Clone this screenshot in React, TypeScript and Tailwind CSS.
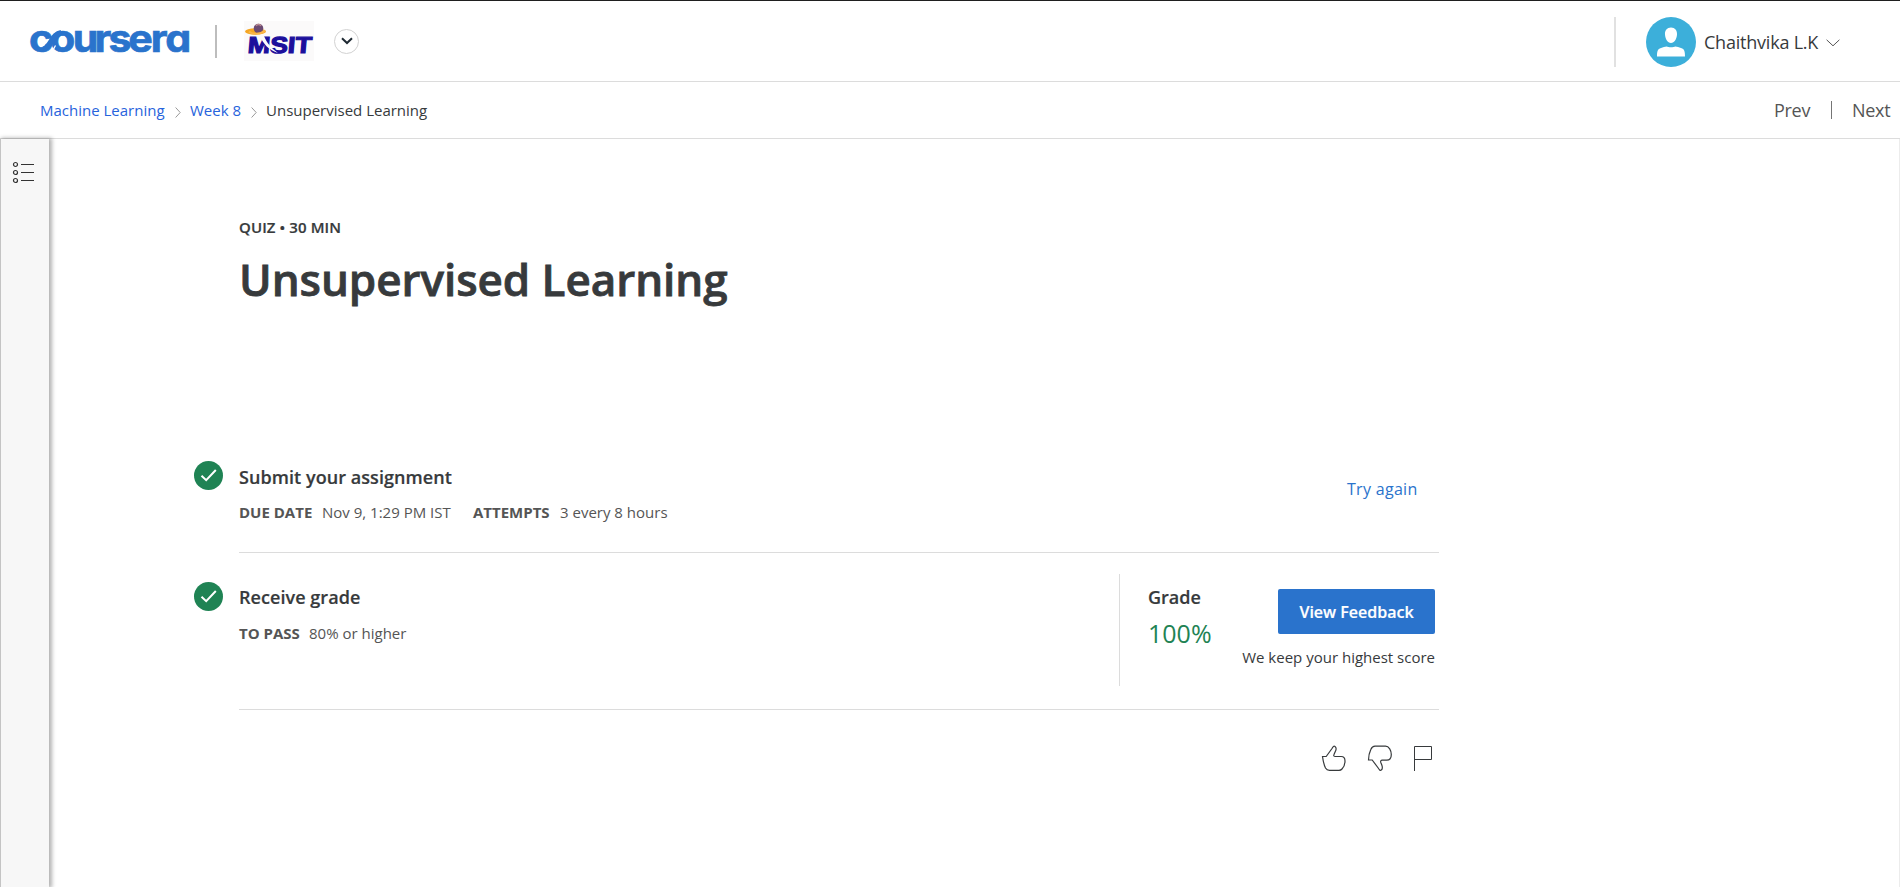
import React from "react";

function CourseraLogo() {
  return (
    <svg width="164" height="56" viewBox="28 13 164 56" className="block overflow-visible">
      <text
        x="27.1 46.800 67.900 88.400 101.500 119.900 141 154.400"
        y="51.6"
        transform="scale(1.07 1)"
        fill="#2a73cc"
        stroke="#2a73cc"
        strokeWidth="0.700"
        className="font-[Inter,sans-serif] text-[38.5px] font-bold leading-none [font-feature-settings:'cv11']"
      >
        coursera
      </text>
      <path d="M43 49.300C51 48 52 33.500 61 32.700" fill="none" stroke="#2a73cc" strokeWidth="5.500" />
      <path d="M52 52l3.500-6.500" fill="none" stroke="#fff" strokeWidth="1.300" />
    </svg>
  );
}

function MsitLogo() {
  return (
    <svg width="70" height="40" viewBox="0 0 70 40" className="block overflow-visible">
      <rect width="70" height="40" fill="#fbfafa" />
      <ellipse cx="11.500" cy="10.500" rx="10.500" ry="3.200" fill="#f5a623" />
      <circle cx="14.500" cy="7.500" r="4.800" fill="#6b4a72" />
      <path d="M12 5c1-2 4-2 5 0" stroke="#b98a90" strokeWidth="1.500" fill="none" />
      <path d="M5 10.500c3 3 12 3 16-1" stroke="#f9b64a" strokeWidth="2" fill="none" />
      <text
        x="3"
        y="32.500"
        textLength="64"
        lengthAdjust="spacingAndGlyphs"
        transform="translate(3 0) skewX(-5)"
        fill="#1c0f9c"
        stroke="#1c0f9c"
        strokeWidth="1.200"
        className="font-['Liberation_Sans',Arial,sans-serif] text-[23px] font-bold leading-none"
      >
        MSIT
      </text>
      <path d="M16 15c3 8 9 14 18 17-7-5-11-10-14-17z" fill="#fbfafa" />
    </svg>
  );
}

function Check() {
  return (
    <svg width="29" height="29" viewBox="0 0 29 29" className="block shrink-0">
      <circle cx="14.500" cy="14.500" r="14.500" fill="#1f8354" />
      <path d="M7.500 14.700l4.700 4.500L21.800 9" fill="none" stroke="#fff" strokeWidth="2" />
    </svg>
  );
}

function Crumb() {
  return (
    <svg width="6" height="11" viewBox="0 0 6 11" className="mt-1 block">
      <path d="M.6.5l4.600 5-4.600 5" fill="none" stroke="#999" />
    </svg>
  );
}

export default function App() {
  return (
    <div className="flex h-[887px] w-[1900px] flex-col overflow-hidden whitespace-nowrap border-t border-[#1f1f1f] bg-white font-['Open_Sans',sans-serif] text-[#373a3c]">
      <header className="flex h-[81px] shrink-0 items-center border-b border-[#dcdcdc]">
        <div className="ml-7">
          <CourseraLogo />
        </div>
        <div className="ml-[23px] h-[33px] w-[2px] bg-[#bdbdbd]" />
        <div className="ml-[27px]">
          <MsitLogo />
        </div>
        <button className="ml-5 flex size-[25px] items-center justify-center rounded-full border border-[#d2d2d2]">
          <svg width="12" height="8" viewBox="0 0 12 8">
            <path d="M1 1.200l5 4.800 5-4.800" fill="none" stroke="#1f2a33" strokeWidth="2" />
          </svg>
        </button>
        <div className="ml-auto mt-[2px] h-[50px] w-[2px] bg-[#e1e1e1]" />
        <svg width="50" height="50" viewBox="0 0 50 50" className="ml-[30px] mt-[2px] block">
          <circle cx="25" cy="25" r="25" fill="#3cafda" />
          <path
            d="M25 10.500c4 0 6.300 3 6 7-.3 4.500-2.700 8.500-6 8.500s-5.700-4-6-8.500c-.3-4 2-7 6-7zM11 39.500c0-5 .5-7.500 4-8.500 2-.6 4-1.500 5.500-1.500 2 1 7 1 9 0 1.500 0 3.500.9 5.500 1.500 3.500 1 4 3.500 4 8.500z"
            fill="#fff"
          />
        </svg>
        <span className="ml-2 mt-[2px] w-[115px] text-lg leading-6 tracking-[-0.22px]">Chaithvika L.K</span>
        <svg width="14" height="8" viewBox="0 0 14 8" className="ml-[7px] mr-[60px] mt-[3px] block">
          <path d="M.6.8L7 6.800 13.400.8" fill="none" stroke="#555" />
        </svg>
      </header>

      <nav className="flex h-[57px] shrink-0 items-center border-b border-[#dcdcdc] text-[15px]">
        <span className="ml-10 w-[125px] text-[#2763dc]">Machine Learning</span>
        <div className="ml-[10px]">
          <Crumb />
        </div>
        <span className="ml-[9px] w-[51px] text-[#2763dc]">Week 8</span>
        <div className="ml-[10px]">
          <Crumb />
        </div>
        <span className="ml-[9px]">Unsupervised Learning</span>
        <span className="ml-auto w-[37px] text-lg tracking-[-0.3px] text-[#555]">Prev</span>
        <div className="ml-5 h-[18px] w-px bg-[#757575]" />
        <span className="ml-5 mr-[9px] w-[39px] text-lg tracking-[-0.3px] text-[#555]">Next</span>
      </nav>

      <div className="flex flex-1">
        <aside className="w-[49px] shrink-0 border-l border-[#c4c4c4] bg-[#f7f7f7] pl-[11px] pt-[22px] shadow-[2px_0_4px_1px_rgba(0,0,0,0.3)]">
          <svg width="23" height="24" viewBox="0 0 23 24" fill="none" stroke="#333" strokeWidth="1.200">
            <circle cx="3.500" cy="3.500" r="2" />
            <circle cx="3.500" cy="11.500" r="2" />
            <circle cx="3.500" cy="19.500" r="2" />
            <path d="M9 3.500h13M9 11.500h13M9 19.500h13" />
          </svg>
        </aside>

        <main className="flex-1 border-r border-[#ececec] pl-[145px] pt-[78px]">
          <div className="ml-[45px] h-5 text-[15px] font-semibold leading-5 tracking-[0.1px] [-webkit-text-stroke:0.2px]">
            QUIZ • 30 MIN
          </div>
          <h1 className="ml-[45px] mt-3 h-[60px] text-[44px] font-semibold leading-[60px] tracking-[-0.04px] [-webkit-text-stroke:0.8px]">
            Unsupervised Learning
          </h1>

          <section className="mt-[143px] flex h-[101px] w-[1245px]">
            <div className="mt-[9px]">
              <Check />
            </div>
            <div className="ml-4 flex flex-1 border-b border-[#dcdcdc]">
              <div className="pt-[13px]">
                <h2 className="h-6 text-lg font-semibold leading-6 tracking-[0.06px] [-webkit-text-stroke:0.2px]">
                  Submit your assignment
                </h2>
                <p className="mt-[13px] flex text-[15px] leading-5 text-[#555]">
                  <span className="w-[83px] font-bold">DUE DATE</span>
                  <span className="w-[151px]">Nov 9, 1:29 PM IST</span>
                  <span className="w-[87px] font-bold">ATTEMPTS</span>
                  <span>3 every 8 hours</span>
                </p>
              </div>
              <a className="ml-auto mr-5 w-[72px] pt-[25px] text-base font-medium leading-6 tracking-[0.3px] text-[#2a73cc]">
                Try again
              </a>
            </div>
          </section>

          <section className="flex h-[157px] w-[1245px]">
            <div className="mt-[29px]">
              <Check />
            </div>
            <div className="ml-4 flex flex-1 border-b border-[#dcdcdc]">
              <div className="w-[880px] pt-8">
                <h2 className="h-6 text-lg font-semibold leading-6 tracking-[0.06px] [-webkit-text-stroke:0.2px]">
                  Receive grade
                </h2>
                <p className="mt-[14px] flex text-[15px] leading-5 text-[#555]">
                  <span className="w-[70px] font-bold">TO PASS</span>
                  <span>80% or higher</span>
                </p>
              </div>
              <div className="mt-[21px] flex h-[112px] flex-1 border-l border-[#dcdcdc] pl-7 pr-1">
                <div className="pt-[11px]">
                  <h3 className="text-lg font-semibold leading-6 [-webkit-text-stroke:0.2px]">Grade</h3>
                  <div className="mt-2 text-[25px] leading-8 text-[#1f8354]">100%</div>
                </div>
                <div className="ml-auto flex flex-col items-end pt-[15px]">
                  <button className="h-[45px] w-[157px] rounded-[2px] bg-[#2a73cc] text-base font-semibold text-white [-webkit-text-stroke:0.2px]">
                    View Feedback
                  </button>
                  <p className="mt-[13px] text-[15px] leading-5">We keep your highest score</p>
                </div>
              </div>
            </div>
          </section>

          <div className="ml-[1126.5px] mt-[34px] flex">
            <svg width="26" height="28" viewBox="0 0 26 28" fill="none" stroke="#373a3c" strokeWidth="1.200">
              <path d="M1.500 12.500h3.700L11 4.500C11.800 3 12.700 1.600 14 2.500c1.700 1.200 1.200 3.200.3 5l-1.300 3c-.6 1.300 0 2 1.200 2h6c3 0 3.800 2 3.800 4.500 0 3-1 6-3 8-.8.9-1.500 1.300-3 1.300H8.500c-2 0-3-.6-4-2.300-1.500-3-2.500-8-3-11.500z" />
            </svg>
            <svg width="26" height="28" viewBox="0 0 26 28" fill="none" stroke="#373a3c" strokeWidth="1.200" className="ml-[20.500px]">
              <path d="M1.500 16h3.700l6 8c1 1.600 1.900 3 3.100 2 1.700-1.300 1.200-3 .5-5l-1-2.500c-.5-1.500.2-2.300 1.400-2.300h4.500c3.500 0 4.600-2.200 4.600-5.700 0-4-2.300-8.300-5.800-8.300H8c-2 0-3.200 1-4.200 3.300-1.400 3-2.300 7-2.300 10.500z" />
            </svg>
            <svg width="22" height="28" viewBox="0 0 22 28" fill="none" stroke="#373a3c" className="ml-[19px]">
              <path d="M2.500 27V2.500h17v13h-17" />
            </svg>
          </div>
        </main>
      </div>
    </div>
  );
}
